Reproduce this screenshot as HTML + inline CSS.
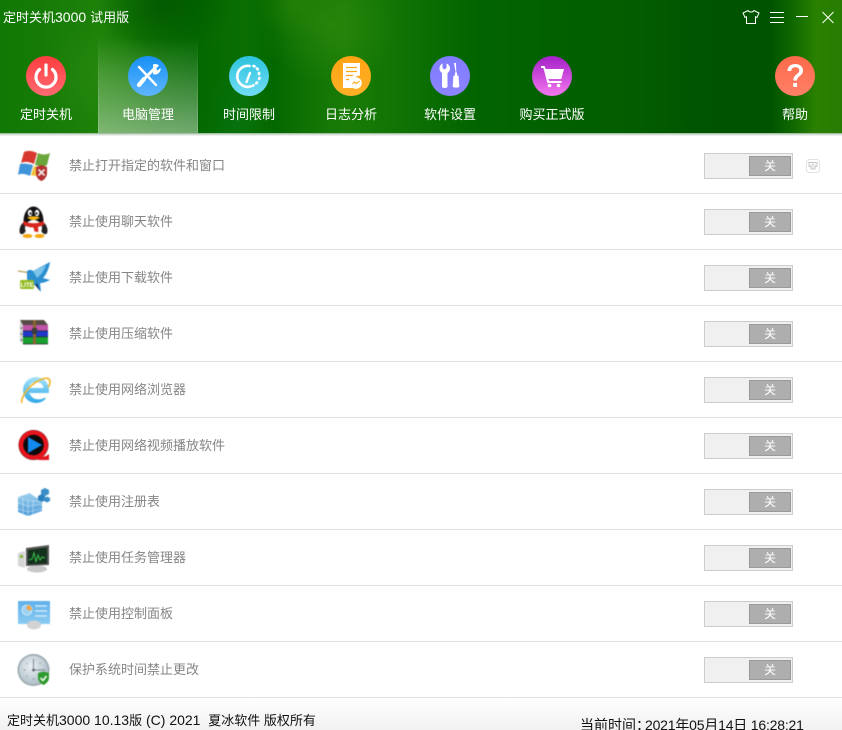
<!DOCTYPE html>
<html lang="zh">
<head>
<meta charset="utf-8">
<title>定时关机3000</title>
<style>
html,body{margin:0;padding:0;width:842px;height:730px;overflow:hidden;background:#fff;}
body{position:relative;font-family:"Liberation Sans","Noto Sans CJK SC",sans-serif;font-size:13px;}
.a{position:absolute;white-space:nowrap;line-height:18px;}
.a i{font-style:normal;font-size:14px;}
#hdr{position:absolute;left:0;top:0;width:842px;height:133px;overflow:hidden;background:
radial-gradient(ellipse 70px 50px at 165px 5px,rgba(0,85,0,.75),rgba(0,85,0,0)),
radial-gradient(ellipse 70px 60px at 330px 25px,rgba(48,140,14,.6),rgba(48,140,14,0)),
radial-gradient(ellipse 60px 50px at 100px 75px,rgba(48,140,20,.45),rgba(48,140,20,0)),
radial-gradient(ellipse 40px 40px at 295px 0,rgba(40,130,5,.7),rgba(40,130,5,0)),
radial-gradient(ellipse 30px 50px at 235px 120px,rgba(0,120,40,.35),rgba(0,120,40,0)),
linear-gradient(90deg,#107804 0,#157b06 40px,#1e8209 100px,#0e7003 150px,#036800 195px,#0a6f02 245px,#036800 275px,#0d7003 300px,#1a7c06 345px,#0f7203 405px,#026500 470px,#026000 550px,#035e00 620px,#005500 700px,#005300 770px,#0c6500 790px,#2a8000 815px,#277d00 842px);}
#hl{position:absolute;left:0;top:133px;width:842px;height:3px;background:linear-gradient(#8fb08f,#dde6dd 60%,#f6f6f6);}
#tab{position:absolute;left:98px;top:38px;width:100px;height:95px;background:linear-gradient(rgba(255,255,255,0),rgba(255,255,255,.43));}
#tab:before,#tab:after{content:"";position:absolute;top:0;bottom:0;width:1px;background:linear-gradient(rgba(255,255,255,0),rgba(255,255,255,.18));}
#tab:before{left:0}#tab:after{right:0}
.tl{position:absolute;top:106px;width:120px;text-align:center;color:#fff;line-height:18px;}
.sep{position:absolute;left:0;width:842px;height:1px;background:#e0e0e0;}
.lb{position:absolute;left:69px;color:#858585;line-height:18px;white-space:nowrap;}
.sw{position:absolute;left:704px;width:87px;height:24px;border:1px solid #ccc;background:#f0f0f0;}
.sw b{position:absolute;left:44px;top:2px;width:40px;height:18px;border:1px solid #999;background:#aeaeae;color:#fff;font-weight:400;font-size:12px;line-height:18px;text-align:center;}
#ft{position:absolute;left:0;top:698px;width:842px;height:32px;background:linear-gradient(#fff,#f1f1f1);}
.soft{filter:blur(.45px);}
</style>
</head>
<body>
<div id="hdr"><div id="tab"></div></div>
<div id="hl"></div>
<div class="a" style="left:3px;top:8px;color:#fff;">定时关机<i>3000 </i>试用版</div>

<div class="tl" style="left:-14px;">定时关机</div>
<div class="tl" style="left:88px;">电脑管理</div>
<div class="tl" style="left:189px;">时间限制</div>
<div class="tl" style="left:291px;">日志分析</div>
<div class="tl" style="left:390px;">软件设置</div>
<div class="tl" style="left:492px;">购买正式版</div>
<div class="tl" style="left:735px;">帮助</div>

<div class="sep" style="top:193px"></div>
<div class="sep" style="top:249px"></div>
<div class="sep" style="top:305px"></div>
<div class="sep" style="top:361px"></div>
<div class="sep" style="top:417px"></div>
<div class="sep" style="top:473px"></div>
<div class="sep" style="top:529px"></div>
<div class="sep" style="top:585px"></div>
<div class="sep" style="top:641px"></div>
<div class="sep" style="top:697px"></div>

<div class="lb" style="top:157px">禁止打开指定的软件和窗口</div>
<div class="lb" style="top:213px">禁止使用聊天软件</div>
<div class="lb" style="top:269px">禁止使用下载软件</div>
<div class="lb" style="top:325px">禁止使用压缩软件</div>
<div class="lb" style="top:381px">禁止使用网络浏览器</div>
<div class="lb" style="top:437px">禁止使用网络视频播放软件</div>
<div class="lb" style="top:493px">禁止使用注册表</div>
<div class="lb" style="top:549px">禁止使用任务管理器</div>
<div class="lb" style="top:605px">禁止使用控制面板</div>
<div class="lb" style="top:661px">保护系统时间禁止更改</div>

<div class="sw" style="top:153px"><b>关</b></div>
<div class="sw" style="top:209px"><b>关</b></div>
<div class="sw" style="top:265px"><b>关</b></div>
<div class="sw" style="top:321px"><b>关</b></div>
<div class="sw" style="top:377px"><b>关</b></div>
<div class="sw" style="top:433px"><b>关</b></div>
<div class="sw" style="top:489px"><b>关</b></div>
<div class="sw" style="top:545px"><b>关</b></div>
<div class="sw" style="top:601px"><b>关</b></div>
<div class="sw" style="top:657px"><b>关</b></div>

<div id="ft"></div>
<div class="a" style="left:7px;top:711px;color:#111;">定时关机<i>3000 10.13</i>版<i> (C) 2021&nbsp; </i>夏冰软件 版权所有</div>
<div class="a" style="left:580px;top:716px;color:#111;font-size:14px;">当前时间：</div>
<div class="a" style="left:645px;top:716px;color:#111;font-size:14px;letter-spacing:-.2px;">2021年05月14日 16:28:21</div>

<svg width="842" height="730" viewBox="0 0 842 730" style="position:absolute;left:0;top:0" xmlns="http://www.w3.org/2000/svg">
<defs>
<linearGradient id="g1" x1="0" y1="0" x2="0" y2="1"><stop offset="0" stop-color="#ff3d40"/><stop offset="1" stop-color="#ff6a72"/></linearGradient>
<linearGradient id="g2" x1="0" y1="0" x2="0" y2="1"><stop offset="0" stop-color="#1790f5"/><stop offset="1" stop-color="#5fb5ff"/></linearGradient>
<linearGradient id="g3" x1="0" y1="0" x2="0" y2="1"><stop offset="0" stop-color="#2cc3dd"/><stop offset="1" stop-color="#72dcf5"/></linearGradient>
<linearGradient id="g4" x1="0" y1="0" x2="0" y2="1"><stop offset="0" stop-color="#ffa313"/><stop offset="1" stop-color="#ffb028"/></linearGradient>
<linearGradient id="g5" x1="0" y1="0" x2="0" y2="1"><stop offset="0" stop-color="#7f7cff"/><stop offset="1" stop-color="#8d84ff"/></linearGradient>
<linearGradient id="g6" x1="0" y1="0" x2="0" y2="1"><stop offset="0" stop-color="#a420c8"/><stop offset="1" stop-color="#f478ee"/></linearGradient>
<linearGradient id="g7" x1="0" y1="0" x2="0" y2="1"><stop offset="0" stop-color="#ff6a4a"/><stop offset="1" stop-color="#ff8068"/></linearGradient>
<linearGradient id="ie" x1="0" y1="0" x2="0" y2="1"><stop offset="0" stop-color="#a8e4fa"/><stop offset="1" stop-color="#2ea6e6"/></linearGradient>
<linearGradient id="blue" x1="0" y1="0" x2="0" y2="1"><stop offset="0" stop-color="#9ed0ef"/><stop offset="1" stop-color="#4a9ad8"/></linearGradient>
<linearGradient id="cp" x1="0" y1="0" x2="0" y2="1"><stop offset="0" stop-color="#5fb0ea"/><stop offset="1" stop-color="#8ccbf2"/></linearGradient>
<radialGradient id="clk" cx=".42" cy=".38" r=".65"><stop offset="0" stop-color="#eaf0f3"/><stop offset="1" stop-color="#aebdc7"/></radialGradient>
</defs>

<!-- window controls -->
<g fill="none" stroke="#fff" stroke-width="1">
<path d="M748 10.500C749 12.500 753 12.500 754 10.500L759 13L757 17.500L755.500 16.800V23.500H746.500V16.800L745 17.500L743 13Z"/>
<path d="M770 12.500h14M770 17.500h14M770 22.500h14"/>
<path d="M796 16.500h12"/>
<path d="M822.500 12l11 11M833.500 12l-11 11"/>
</g>

<!-- nav circles -->
<circle cx="46" cy="76" r="20" fill="url(#g1)"/>
<g fill="none" stroke="#fff" stroke-width="3.200" stroke-linecap="round"><path d="M46 65v10"/><path d="M39.500 69.500a10 10 0 1 0 13 0"/></g>

<circle cx="148" cy="76" r="20" fill="url(#g2)"/>
<g fill="none" stroke="#fff" stroke-linecap="round"><path d="M139 67l17 18" stroke-width="2.400"/><path d="M155 68l-14 14" stroke-width="3"/><path d="M144 79l-5 6" stroke-width="4.200"/></g>
<path d="M153 64.500a5.500 5.500 0 0 1 6 1l-3 3 1.500 2 3-2.500a5.500 5.500 0 0 1-7.500 6z" fill="#fff"/>

<circle cx="249" cy="76" r="20" fill="url(#g3)"/>
<g fill="none" stroke="#fff" stroke-linecap="round"><path d="M249.500 66a10.500 10.500 0 1 0 1 20.500" stroke-width="2.600"/><path d="M246.500 82l3.500-9" stroke-width="2.400"/><path d="M253.500 66l1 .4M257 68.500l.7.800M259 73v1M259.500 78l-.3.800M257 82.500l-.7.700M253.500 85.300l-.8.300" stroke-width="2.700"/></g>

<circle cx="351" cy="76" r="20" fill="url(#g4)"/>
<path d="M343 63h17v12.500a8 8 0 0 0-6 12.500h-11z" fill="#fff"/>
<path d="M346 67.500h11M346 71.500h11M346 75.500h7M346 79.500h3" stroke="#ffa818" stroke-width="1.300" fill="none"/>
<circle cx="356" cy="83" r="5.800" fill="#fff"/>
<path d="M352.500 84l2-2 2 1.500 3-2.500" stroke="#ffa818" stroke-width="1.100" fill="none"/>

<circle cx="450" cy="76" r="20" fill="url(#g5)"/>
<path d="M442.500 63.500v4.500l2 1.500 2-1.500v-4.500c2.500 1 3.500 3 3.500 5s-1 3.500-2.500 4.500v13.500c0 2-5.500 2-5.500 0v-13.500c-1.500-1-2.500-2.500-2.500-4.500s1-4 3-5z" fill="#fff"/>
<path d="M454 63h2l.3 9.500h.7v3h1.500l.8 11c0 1.500-6.600 1.500-6.600 0l.8-11h1.500v-3h.7z" fill="#fff"/>

<circle cx="552" cy="76" r="20" fill="url(#g6)"/>
<path d="M541 66h3.500l1.300 3h18.200l-2.700 10h-13l.8 2h12.400v2h-14.100l-4-15h-2.400z" fill="#fff"/>
<circle cx="549.500" cy="85.500" r="1.800" fill="#fff"/><circle cx="558.500" cy="85.500" r="1.800" fill="#fff"/>

<circle cx="795" cy="76" r="20" fill="url(#g7)"/>
<path d="M787.500 71c0-4.500 3.500-7 7.700-7 4.300 0 7.800 2.500 7.800 6.500 0 5.500-6 5.500-6 10h-3.700c0-6 6-6.500 6-10 0-2-1.800-3.200-4-3.200s-4 1.300-4.100 3.700z" fill="#fff"/>
<rect x="793.200" y="83" width="3.800" height="4" fill="#fff"/>

<!-- small expand icon -->
<rect x="806.500" y="159.500" width="13" height="13" rx="3" fill="#fff" stroke="#e2e2e2"/>
<path d="M809 162.500h8v4h-2v2.500h-4v-2.500h-2z" fill="none" stroke="#c4c4c4"/>
<path d="M813 162v7M810 165h6" stroke="#d0d0d0" stroke-width=".8"/>

<g class="soft">
<!-- 1 windows -->
<g>
<path d="M24 152c4-2 9-1 13 1l-3 11c-4-2-9-3-13-1z" fill="#d8372f"/>
<path d="M38 153c4 2 8 2 12 0l-3 12c-3 2-9 1-12 0z" fill="#6aa63a"/>
<path d="M20 164c4-1 9 0 13 1l-3 11c-4-2-9-3-12-1z" fill="#3f93d8"/>
<path d="M34 166c2 .5 3 .7 5 1l-2 9c-2 0-4-.5-6-1z" fill="#f2c23c"/>
<path d="M36 167l5.500-2 5.500 2v6c0 4-3 7-5.500 8-3-1-5.500-4-5.500-8z" fill="#b5302e"/>
<path d="M38.500 169.500l6 6M44.500 169.500l-6 6" stroke="#eee" stroke-width="1.800"/>
</g>

<!-- 2 QQ -->
<g>
<ellipse cx="33.500" cy="221" rx="10" ry="14.500" fill="#111"/>
<ellipse cx="23.500" cy="228" rx="3.500" ry="6.500" fill="#222" transform="rotate(22 23.500 228)"/>
<ellipse cx="43.500" cy="228" rx="3.500" ry="6.500" fill="#222" transform="rotate(-22 43.500 228)"/>
<ellipse cx="33.500" cy="228" rx="8.500" ry="8" fill="#fff"/>
<ellipse cx="30" cy="213" rx="2.200" ry="3.200" fill="#fff"/><ellipse cx="37" cy="213" rx="2.200" ry="3.200" fill="#fff"/>
<circle cx="30.500" cy="213.500" r="1.100" fill="#111"/><circle cx="36.500" cy="213.500" r="1.100" fill="#111"/>
<path d="M27 217.500q6.500-2.500 13 0q-6.500 5-13 0z" fill="#f5b60f"/>
<path d="M23.500 221q10 4.500 20 0l1 3.500q-4 2-6.500 2.500l.5 5-4-.5-1-4q-5.500 0-10.500-3z" fill="#d8261d"/>
<ellipse cx="27.500" cy="236" rx="5" ry="2" fill="#f5a90f"/><ellipse cx="39.500" cy="236" rx="5" ry="2" fill="#f5a90f"/>
</g>

<!-- 3 download bird -->
<g>
<path d="M18 271l10 1.500" stroke="#a58b3a" stroke-width="1"/>
<path d="M27 271c3-2 5-1 6 0l17-9c-1 7-4 13-7 16l7 2c-4 2-7 3-10 3l1 9-6-7c-5 0-8-3-8-7z" fill="#2b8fd0"/>
<path d="M33 271l13-6c-2 5-4 9-9 13z" fill="#7dc4ea"/>
<path d="M37 283l3 8-5-6z" fill="#123c66"/>
<rect x="20" y="280" width="14" height="9" rx="1.500" fill="#94bc20"/>
<text x="27" y="287" font-family="Liberation Sans,sans-serif" font-size="6" font-weight="700" fill="#fff" text-anchor="middle">LITE</text>
</g>

<!-- 4 winrar -->
<g>
<path d="M20 320h24l4 5v2H24z" fill="#554a44"/>
<rect x="23" y="325" width="25" height="6" fill="#c052a8"/>
<rect x="23" y="331" width="25" height="6" fill="#2038c8"/>
<rect x="23" y="337" width="25" height="7" fill="#18a030"/>
<path d="M20 321l3 4v19l-3-3z" fill="#cfcfcf"/>
<path d="M20 328h3M20 334h3M20 340h3" stroke="#777"/>
<path d="M23 330.800h25M23 336.800h25M23 344h25" stroke="#222" stroke-width=".7"/>
<rect x="33" y="320" width="3" height="24" fill="#8a6230"/>
<rect x="32" y="328" width="5" height="6" fill="#3a3a3a"/>
</g>

<!-- 5 IE -->
<g>
<circle cx="36" cy="390" r="13" fill="url(#ie)"/>
<path d="M29 388c0-8 14-8 14.500 0z" fill="#fff"/>
<path d="M29 393h22v5h-7c-3 2-9 2-12-1z" fill="#fff"/>
<path d="M22 403c-2-4 6-18 18-23 6-3 10-2 10 2 0 2-1 4-2 5" fill="none" stroke="#f0b833" stroke-width="1.700"/>
</g>

<!-- 6 QVOD -->
<g>
<circle cx="33.500" cy="445" r="15" fill="#151515"/>
<circle cx="33.500" cy="445" r="12.500" fill="#0a0a0a" stroke="#e6141c" stroke-width="4.500"/>
<path d="M38 456l4 1 4-1 3-2v6h-11z" fill="#e6141c"/>
<path d="M28 437l14 8-14 8z" fill="#1289ee"/>
</g>

<!-- 7 registry -->
<g>
<path d="M18 497l12-4 3 2.500 4 2.500 5 4v9l-14 5-10-4z" fill="url(#blue)"/>
<path d="M18 497l10 3v16M28 500l14 2M18 503l10 3 14-2M18 509l10 3 14-3M23 498v17M33 500v14" stroke="#cfe6f5" stroke-width=".6" fill="none"/>
<path d="M41 490l4-2 4 2v4l-4 2-4-2z" fill="#3b8ec8"/>
<path d="M38 496l4-2 3 2v4l-3 2-4-2z" fill="#2b7fba"/>
<path d="M44 498l3-1.500 3 1.500v3l-3 1.500-3-1.500z" fill="#3b8ec8"/>
</g>

<!-- 8 task manager -->
<g>
<path d="M26 548l23-3v20l-23 1z" fill="#555"/>
<path d="M28 550l19-2.500v16l-19 1z" fill="#13301c"/>
<path d="M29 560l3-1 2-6 2 9 2-7 2 5 2-3 3 1" fill="none" stroke="#39c14c" stroke-width="1"/>
<path d="M18 553l7-2v17l-7-2z" fill="#d6d6d6"/>
<rect x="20" y="555" width="3" height="3" fill="#7fb83a"/>
<ellipse cx="37" cy="569" rx="10" ry="3.500" fill="#c8c8c8"/>
</g>

<!-- 9 control panel -->
<g>
<rect x="18" y="601" width="32" height="23" fill="url(#cp)"/>
<circle cx="27" cy="610" r="5" fill="#9ed0f0" stroke="#d9effb" stroke-width=".8"/>
<path d="M27 605a5 5 0 0 1 5 5h-5z" fill="#f5a13c"/>
<path d="M35 606h12M35 611h12M35 616h12" stroke="#cfe9f9" stroke-width="1.500"/>
<ellipse cx="34" cy="625" rx="7" ry="4.500" fill="#d3d3d3"/>
</g>

<!-- 10 clock -->
<g>
<circle cx="33.500" cy="670" r="16" fill="#98a6ad"/>
<circle cx="33.500" cy="670" r="14.500" fill="url(#clk)"/>
<path d="M33.500 670v-11M33.500 670h12" stroke="#6a7378" stroke-width=".8"/>
<path d="M33.500 660v2M33.500 678v2M23.500 670h2M41.500 670h2M26.500 663l1 1M40.500 663l-1 1M26.500 677l1-1" stroke="#7d878c" stroke-width=".8"/>
<circle cx="33.500" cy="670" r="1.300" fill="#556"/>
<path d="M38 673l5.500-1.500 5.500 1.500v5c0 3-3 6-5.500 7-2.500-1-5.500-4-5.500-7z" fill="#2e9a2e"/>
<path d="M40.500 678l2.500 2.500 3.500-4.500" stroke="#fff" stroke-width="1.500" fill="none"/>
</g>
</g>
</svg>
</body>
</html>
